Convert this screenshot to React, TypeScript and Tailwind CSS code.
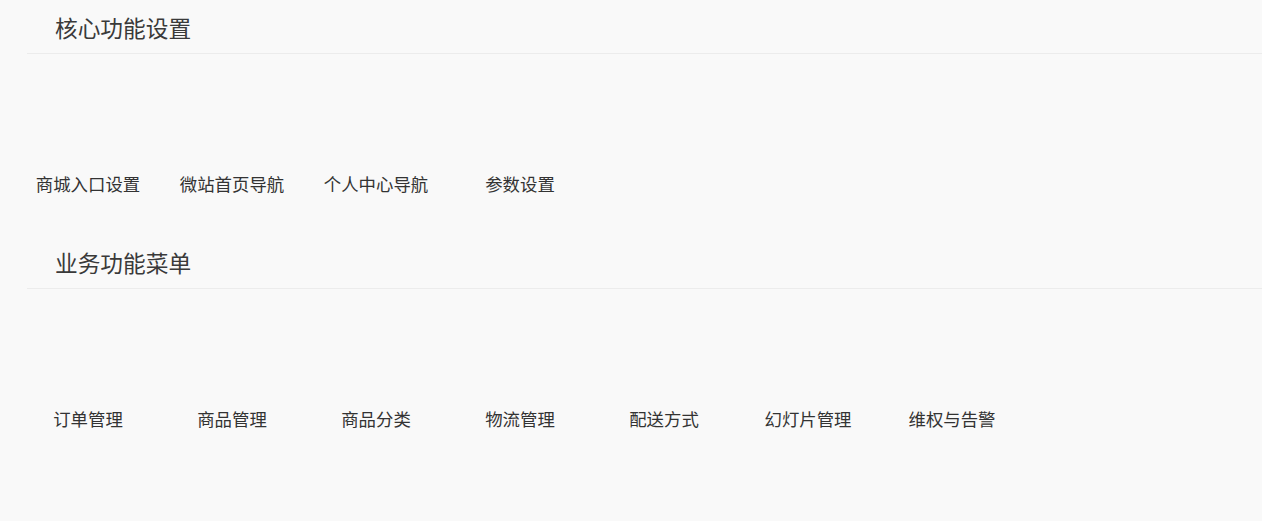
import React from "react";

const sections = [
  {
    title: "核心功能设置",
    items: ["商城入口设置", "微站首页导航", "个人中心导航", "参数设置"],
  },
  {
    title: "业务功能菜单",
    items: ["订单管理", "商品管理", "商品分类", "物流管理", "配送方式", "幻灯片管理", "维权与告警"],
  },
];

export default function App() {
  return (
    <div
      className="w-full min-h-[521px] bg-[#f9f9f9] text-[#333]"
      style={{ fontFamily: '"Microsoft YaHei", "Noto Sans CJK SC", "Noto Sans", sans-serif' }}
    >
      {sections.map((s) => (
        <section key={s.title} className="h-[235px]">
          <div className="ml-[27px] border-b border-[#ececec] pl-[28px] pt-[16px] pb-[13px]">
            <h2 className="text-[22.7px] leading-[24px] font-normal text-[#3a3a3a]">{s.title}</h2>
          </div>
          <div className="flex pl-[16px] pt-[118px]">
            {s.items.map((it) => (
              <div key={it} className="w-[144px] text-center text-[17.4px] leading-[24px]">
                {it}
              </div>
            ))}
          </div>
        </section>
      ))}
    </div>
  );
}
